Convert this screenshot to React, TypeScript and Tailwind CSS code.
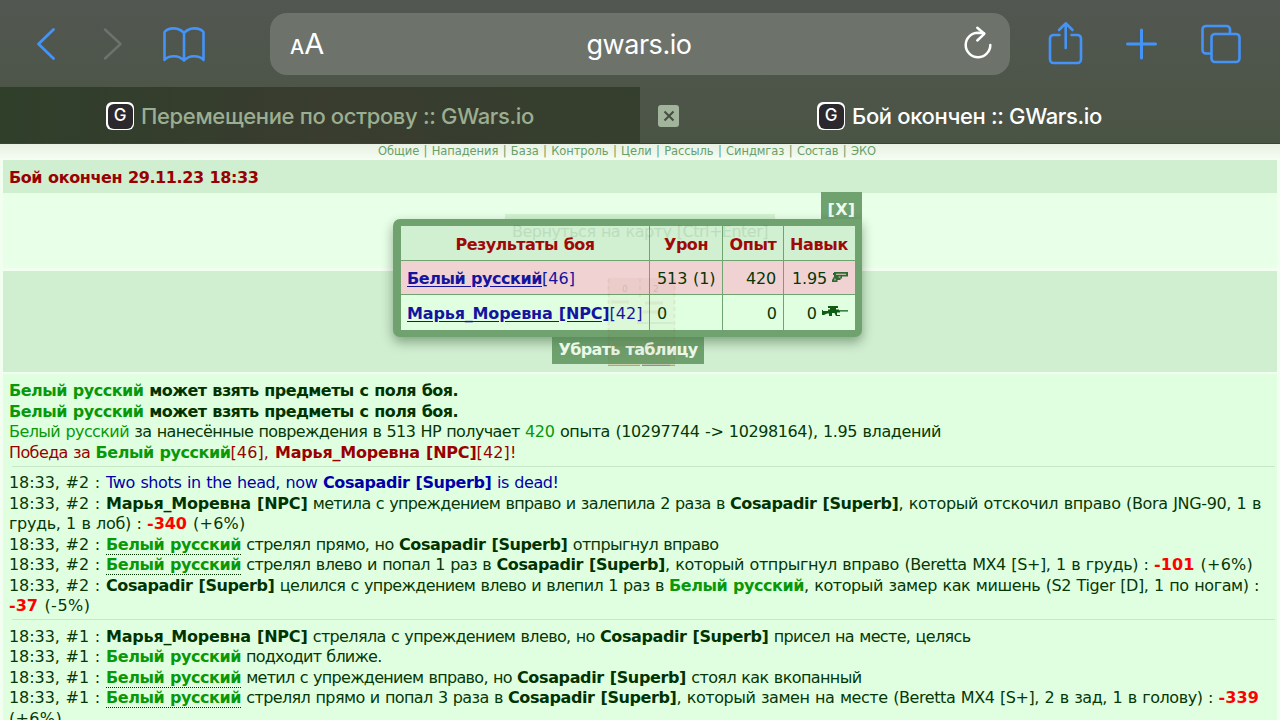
import React, { useLayoutEffect, useRef, useState } from 'react';

/** Text run whose tracking is adjusted so that it fills the given width. */
function Fit({ w, className = '', children }: { w: number; className?: string; children: string }) {
  const ref = useRef<HTMLSpanElement>(null);
  const [spacing, setSpacing] = useState(0);
  useLayoutEffect(() => {
    const el = ref.current;
    if (!el) return;
    el.style.letterSpacing = '0px';
    const natural = el.getBoundingClientRect().width;
    const s = (w - natural) / children.length;
    el.style.letterSpacing = s + 'px';
    setSpacing(s);
  }, [w, children]);
  return (
    <span ref={ref} className={'whitespace-pre ' + className} style={{ letterSpacing: spacing + 'px' }}>
      {children}
    </span>
  );
}

type Kind = 'n' | 'b' | 'me' | 'dot' | 'green' | 'red' | 'maroon' | 'maroonB' | 'blue' | 'blueB';
type Run = [Kind, string, number];

const kinds: Record<Kind, string> = {
  n: '',
  b: 'font-bold text-[#003300]',
  me: 'font-bold text-[#089808]',
  dot: 'font-bold text-[#089808] border-b border-dotted border-[#003300]',
  green: 'text-[#089808]',
  red: 'font-bold text-[#ff0000]',
  maroon: 'text-[#990000]',
  maroonB: 'font-bold text-[#990000]',
  blue: 'text-[#0000a8]',
  blueB: 'font-bold text-[#0000a8]',
};

const ME = 'Белый русский';
const MARYA = 'Марья_Моревна [NPC]';
const COSA = 'Cosapadir [Superb]';

// Each run holds its style, its text and the x at which it ends; lines start at x = 9.
const blocks: Run[][][] = [
  [
    [['me', ME, 143.5], ['b', ' может взять предметы с поля боя.', 458]],
    [['me', ME, 143.5], ['b', ' может взять предметы с поля боя.', 458]],
    [['green', ME, 129], ['n', ' за нанесённые повреждения в 513 HP получает ', 525], ['green', '420', 554.5], ['n', ' опыта (10297744 -> 10298164), 1.95 владений', 941]],
    [['maroon', 'Победа за ', 95.5], ['me', ME, 230.5], ['maroon', '[46], ', 275], ['maroonB', MARYA, 476.5], ['maroon', '[42]!', 516.5]],
  ],
  [
    [['n', '18:33, #2 : ', 106], ['blue', 'Two shots in the head, now ', 323], ['blueB', COSA, 491.5], ['blue', ' is dead!', 558.5]],
    [['n', '18:33, #2 : ', 106], ['b', MARYA, 307.5], ['n', ' метила с упреждением вправо и залепила 2 раза в ', 730], ['b', COSA, 898.5], ['n', ', который отскочил вправо (Bora JNG-90, 1 в', 1261]],
    [['n', 'грудь, 1 в лоб) : ', 147], ['red', '-340', 187], ['n', ' (+6%)', 245.5]],
    [['n', '18:33, #2 : ', 106], ['dot', ME, 241], ['n', ' стрелял прямо, но ', 399], ['b', COSA, 567.5], ['n', ' отпрыгнул вправо', 718.5]],
    [['n', '18:33, #2 : ', 106], ['dot', ME, 241], ['n', ' стрелял влево и попал 1 раз в ', 496.5], ['b', COSA, 665], ['n', ', который отпрыгнул вправо (Beretta MX4 [S+], 1 в грудь) : ', 1154], ['red', '-101', 1194.5], ['n', ' (+6%)', 1253]],
    [['n', '18:33, #2 : ', 106], ['b', COSA, 274.5], ['n', ' целился с упреждением влево и влепил 1 раз в ', 669], ['me', ME, 804], ['n', ', который замер как мишень (S2 Tiger [D], 1 по ногам) :', 1259]],
    [['red', '-37', 38], ['n', ' (-5%)', 90.5]],
  ],
  [
    [['n', '18:33, #1 : ', 106], ['b', MARYA, 307.5], ['n', ' стреляла с упреждением влево, но ', 600], ['b', COSA, 768.5], ['n', ' присел на месте, целясь', 970.5]],
    [['n', '18:33, #1 : ', 106], ['me', ME, 241], ['n', ' подходит ближе.', 381.5]],
    [['n', '18:33, #1 : ', 106], ['dot', ME, 241], ['n', ' метил с упреждением вправо, но ', 517], ['b', COSA, 686], ['n', ' стоял как вкопанный', 861.5]],
    [['n', '18:33, #1 : ', 106], ['dot', ME, 241], ['n', ' стрелял прямо и попал 3 раза в ', 508], ['b', COSA, 676.5], ['n', ', который замен на месте (Beretta MX4 [S+], 2 в зад, 1 в голову) : ', 1218.5], ['red', '-339', 1259]],
    [['n', '(+6%)', 62]],
  ],
];

function Line({ runs }: { runs: Run[] }) {
  return (
    <div className="h-[20.5px] leading-[20.5px] whitespace-pre">
      {runs.map(([kind, text, end], i) => (
        <Fit key={i} w={end - (i ? runs[i - 1][2] : 9)} className={kinds[kind]}>
          {text}
        </Fit>
      ))}
    </div>
  );
}

function Favicon() {
  return (
    <span className="flex h-7 w-7 shrink-0 items-center justify-center rounded-[6px] bg-white">
      <span className="flex h-[25px] w-[25px] items-center justify-center rounded-[6px] bg-[#2b292e] text-[17px] font-medium text-white">G</span>
    </span>
  );
}

function Pistol() {
  return (
    <svg className="ml-[5px] h-[11px] w-4 shrink-0 fill-[#2f6a30]" viewBox="0 0 16 11">
      <path fillRule="evenodd" d="M2 0H16V4.500H10V6.500H8.500V8H5.500V10H0V8L2 4.500V3H1V1H2ZM4 1.800V2.800H14V1.800ZM6.500 4.500V5.500H8.500V4.500ZM2.500 6.500V8.500H3.500V6.500Z" />
    </svg>
  );
}

function Rifle() {
  return (
    <svg className="ml-[5px] h-[11px] w-[26px] shrink-0 fill-[#0c5c14]" viewBox="0 0 26 11">
      <path d="M6 0H16V2H14V3.500H17V4.200H26V5.500H18V6.500H15V9H18V10H14L12.500 7H10V10H7V7.500H5L2 9H0V4H1V5H6V3.500H8V2H6Z" />
    </svg>
  );
}

const blue = 'stroke-[#4493f8]';
const cell = 'flex items-center border-[#6fa36f] pt-[2px]';
const head = 'flex items-center justify-center border-[#6fa36f] bg-[#d1efd1] pt-[3px] font-bold text-[#a00808]';

function Results() {
  return (
    <section className="absolute top-[192px] left-[393px] flex w-[469px] flex-col">
      <div className="flex h-[27px] w-[41px] items-center justify-center self-end bg-[#6fa26f] pt-[9px] font-bold text-[#eefaee]">
        <Fit w={28}>[X]</Fit>
      </div>
      <div className="h-[118px] rounded-[7px] rounded-tr-none bg-[#6fa26f] pt-[7px] pr-[7px] pl-[8px] shadow-[0_5px_12px_rgba(0,40,0,0.38)]">
        <div className="grid h-[104px] grid-cols-[249px_73px_61px_71px] grid-rows-[34px_35px_35px]">
          <div className={head + ' border-r'}><Fit w={139}>Результаты боя</Fit></div>
          <div className={head + ' border-r'}><Fit w={44}>Урон</Fit></div>
          <div className={head + ' border-r'}><Fit w={47}>Опыт</Fit></div>
          <div className={head + ' pr-px'}><Fit w={58}>Навык</Fit></div>

          <div className={cell + ' border-y border-r bg-[#f0d2d2] pl-[6px] text-[#1414a0]'}>
            <Fit w={135} className="font-bold underline underline-offset-2">{ME}</Fit>
            <Fit w={33}>[46]</Fit>
          </div>
          <div className={cell + ' border-y border-r bg-[#f0d2d2] pl-[7px]'}><Fit w={58.5}>513 (1)</Fit></div>
          <div className={cell + ' justify-end border-y border-r bg-[#f0d2d2] pr-[7px]'}><Fit w={30}>420</Fit></div>
          <div className={cell + ' justify-end border-y bg-[#f0d2d2] pr-[7px]'}><Fit w={35}>1.95</Fit><span className="mb-[2px] flex"><Pistol /></span></div>

          <div className={cell + ' border-r bg-[#e0ffe0] pl-[6px] text-[#1414a0]'}>
            <Fit w={202.5} className="font-bold underline underline-offset-2">{MARYA}</Fit>
            <Fit w={33}>[42]</Fit>
          </div>
          <div className={cell + ' border-r bg-[#e0ffe0] pl-[7px]'}>0</div>
          <div className={cell + ' justify-end border-r bg-[#e0ffe0] pr-[6px]'}>0</div>
          <div className={cell + ' justify-end bg-[#e0ffe0] pr-[7px]'}>0<span className="mb-[5px] flex"><Rifle /></span></div>
        </div>
      </div>
      <div className="ml-[159px] flex h-[27px] w-[152px] items-center justify-center bg-linear-to-b from-[#5f8e5f] via-[#6c9f6c] via-40% to-[#6fa26f] pb-px font-bold text-[#eaf8ea]">
        <Fit w={139}>Убрать таблицу</Fit>
      </div>
    </section>
  );
}

export default function App() {
  return (
    <div className="relative flex h-[720px] w-[1280px] flex-col overflow-hidden bg-[#f2fef0] font-['DejaVu_Sans',sans-serif] text-[16px] text-[#063706] [word-spacing:0.8px]">
      <header className="h-[144px] shrink-0 border-b border-[#3a4335] bg-linear-to-b from-[#525751] to-[#4a5444] font-['Inter',sans-serif] [word-spacing:0px]">
        <div className="flex h-[87px] items-center">
          <svg className={'h-[87px] w-[270px] fill-none ' + blue} strokeWidth="2.8" strokeLinecap="round" strokeLinejoin="round">
            <path d="M53.500 29.500 38.500 44 53.500 58.500" />
            <path className="stroke-[#6d726c]" strokeWidth="2.4" d="M105 29.500 120.500 44 105 58.500" />
            <path strokeWidth="2.6" d="M184 33C179 27 169 27 164.500 32V60C169 55 179 55 184 60.500C189 55 199 55 203.500 60V32C199 27 189 27 184 33V60" />
          </svg>
          <div className="flex h-[62px] w-[740px] items-center rounded-[17px] bg-[#6d726b] text-white">
            <div className="flex w-[120px] items-baseline pl-5 pt-px">
              <span className="text-[20px] font-medium">A</span>
              <span className="text-[29px]">A</span>
            </div>
            <div className="grow pt-[3px] pr-[2px] text-center text-[27px]"><Fit w={105}>gwars.io</Fit></div>
            <svg className="h-[62px] w-[120px] fill-none stroke-white" strokeWidth="2.5" strokeLinecap="round" strokeLinejoin="round">
              <path d="M100.300 32A12.300 12.300 0 1 1 88 19.700L94 20.300" />
              <path d="M87.300 14.800 94.300 20.800 87.300 27.500" />
            </svg>
          </div>
          <svg className={'h-[87px] w-[270px] fill-none ' + blue} strokeWidth="2.6" strokeLinecap="round" strokeLinejoin="round">
            <path d="M49.500 35H43.500A3.500 3.500 0 0 0 40 38.500V59.500A3.500 3.500 0 0 0 43.500 63H67.500A3.500 3.500 0 0 0 71 59.500V38.500A3.500 3.500 0 0 0 67.500 35H61.500M55.700 48V24M49 30 55.700 23.300 62.500 30" />
            <path strokeWidth="3" d="M131.500 30V58M117.500 44H145.500" />
            <rect x="201.500" y="34" width="28" height="28" rx="3.500" />
            <path d="M201 53.500H196A3.500 3.500 0 0 1 192.500 50V29.500A3.500 3.500 0 0 1 196 26H216.500A3.500 3.500 0 0 1 220 29.500V33" />
          </svg>
        </div>
        <div className="flex h-[56px] text-[22px] font-medium">
          <div className="flex w-[640px] items-center justify-center gap-[7px] bg-linear-to-r from-[#2f3f2a] via-[#393c2f] to-[#353f2d] pt-[2px] text-[#9cae92]">
            <Favicon />
            <Fit w={393}>Перемещение по острову :: GWars.io</Fit>
          </div>
          <div className="relative flex w-[640px] items-center justify-center gap-[7px] pt-[2px] pr-px text-white">
            <span className="absolute top-[18px] left-[18px] flex h-[22px] w-[21px] items-center justify-center rounded-[3px] bg-[#a2b49b]">
              <svg className="h-3 w-3 stroke-[#444f3f]" strokeWidth="2"><path d="M1.500 1.500 10.500 10.500M10.500 1.500 1.500 10.500" /></svg>
            </span>
            <Favicon />
            <Fit w={250}>Бой окончен :: GWars.io</Fit>
          </div>
        </div>
      </header>
      <nav className="h-4 bg-linear-to-b from-[#e8f1e4] to-[#f6fdf3] pr-[26px] text-center text-[11.500px] leading-[15px] text-[#68a068]">
        <Fit w={498}>Общие | Нападения | База | Контроль | Цели | Рассыль | Синдмгаз | Состав | ЭКО</Fit>
      </nav>
      <main className="px-[3px]">
        <div className="h-[33px] bg-[#d0eed0] pl-[6px] font-bold leading-[35px] text-[#990000]"><Fit w={249.5}>Бой окончен 29.11.23 18:33</Fit></div>
        <div className="flex h-[75px] justify-center bg-[#e8ffe8] pt-[21px]">
          <div className="h-7 w-[270px] bg-[#d1f2d1]" />
        </div>
        <div className="mt-[3px] h-[101px] bg-[#d0eed0]" />
        <div className="mt-[2px] h-[346px] overflow-hidden bg-[#e0ffe0] px-[6px] pt-[7px]">
          {blocks.map((lines, i) => (
            <div key={i}>
              {i > 0 && <div className="mt-[2.800px] -mr-[4px] mb-[6.400px] ml-[3px] h-px bg-[#c8e6c8]" />}
              {lines.map((runs, j) => <Line key={j} runs={runs} />)}
            </div>
          ))}
        </div>
      </main>
      <Results />
      <div className="absolute top-[222px] left-[512px] leading-5 text-[#2f6b2f] opacity-[0.13]">
        <Fit w={256}>Вернуться на карту [Ctrl+Enter]</Fit>
      </div>
      <svg className="absolute top-[277px] left-[607px] h-[90px] w-[70px]">
        <g className="fill-none stroke-[#a05030] opacity-[0.07]">
          <path strokeWidth="2" strokeDasharray="4 3" d="M1.500 2V87M33 2V22M67.500 2V87" />
          <path strokeWidth="3" d="M4 25H22M38 26H56M36 35H58M5 68H27M38 68H60" />
        </g>
        <rect className="fill-[#805020] opacity-[0.04]" x="1" y="1" width="67" height="87" />
        <path className="stroke-[#a0c8a0] opacity-40" d="M30 46H66" />
        <path className="stroke-[#d89858]" strokeWidth="1.200" d="M1 88.300H33M63 88.300H68" />
        <path className="stroke-[#a07888]" strokeWidth="1.200" d="M35 88.300H63" />
        <text className="fill-[#335533] text-[9px] opacity-15" x="15" y="15">0</text>
        <text className="fill-[#335533] text-[9px] opacity-15" x="46" y="15">2</text>
      </svg>
    </div>
  );
}
